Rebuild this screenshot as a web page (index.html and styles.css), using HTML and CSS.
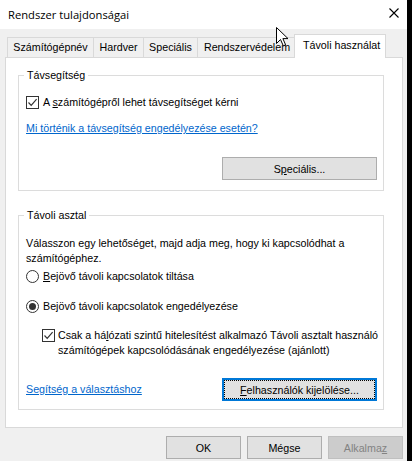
FILE: index.html
```html
<!DOCTYPE html>
<html lang="hu">
<head>
<meta charset="utf-8">
<title>Rendszer tulajdonságai</title>
<link rel="stylesheet" href="styles.css">
</head>
<body>
<div class="window">
  <div class="titlebar">
    <span class="title">Rendszer tulajdonságai</span>
    <svg class="close" width="10" height="10" viewBox="0 0 10 10"><path d="M0.5 0.5 L9.5 9.5 M9.5 0.5 L0.5 9.5" stroke="#000" stroke-width="1.1" fill="none"/></svg>
  </div>
  <div class="main">
    <div class="tabs">
      <div class="tab t1">Számítógépnév</div>
      <div class="tab t2">Hardver</div>
      <div class="tab t3">Speciális</div>
      <div class="tab t4">Rendszervédelem</div>
      <div class="tab active">Távoli használat</div>
    </div>
    <div class="panel">
      <fieldset class="group g1">
        <legend>Távsegítség</legend>
        <div class="row">
          <span class="cb"><svg width="11" height="11" viewBox="0 0 11 11"><path d="M1.5 5.5 L4.2 8.3 L9.6 2.2" stroke="#333" stroke-width="1.2" fill="none"/></svg></span>
          <span class="label">A <u>s</u>zámítógépről lehet távsegítséget kérni</span>
        </div>
        <a class="link l1" href="#">Mi történik a távsegítség engedélyezése esetén?</a>
        <div class="btnrow">
          <button class="btn wide">S<u>p</u>eciális...</button>
        </div>
      </fieldset>
      <fieldset class="group g2">
        <legend>Távoli asztal</legend>
        <p class="desc">Válasszon egy lehetőséget, majd adja meg, hogy ki kapcsolódhat a<br>számítógéphez.</p>
        <div class="row r1">
          <span class="radio"></span>
          <span class="label"><u>B</u>ejövő távoli kapcsolatok tiltása</span>
        </div>
        <div class="row r2">
          <span class="radio on"><span class="dot"></span></span>
          <span class="label">Be<u>j</u>övő távoli kapcsolatok engedélyezése</span>
        </div>
        <div class="nla">
          <span class="cb"><svg width="11" height="11" viewBox="0 0 11 11"><path d="M1.5 5.5 L4.2 8.3 L9.6 2.2" stroke="#333" stroke-width="1.2" fill="none"/></svg></span>
          <span class="label multi">Csak a há<u>l</u>ózati szintű hitelesítést alkalmazó Távoli asztalt használó<br>számítógépek kapcsolódásának engedélyezése (ajánlott)</span>
        </div>
        <div class="btnrow split">
          <a class="link" href="#">Segítség a választáshoz</a>
          <button class="btn wide focus"><u>F</u>elhasználók kijelölése...</button>
        </div>
      </fieldset>
    </div>
    <div class="footer">
      <button class="btn">OK</button>
      <button class="btn">Mégse</button>
      <button class="btn disabled">Alkalma<u>z</u></button>
    </div>
  </div>
  <svg class="cursor" width="13" height="20" viewBox="0 0 13 20"><path d="M0.5 0.5 L0.5 16.5 L4.5 12.5 L7.3 18.8 L9.6 17.8 L6.9 11.6 L12 11.6 Z" fill="#fff" stroke="#000" stroke-width="1" stroke-linejoin="miter"/></svg>
</div>
</body>
</html>
```
FILE: styles.css
```css
html, body {
  margin: 0;
  padding: 0;
}
body {
  background: #000;
  font-family: "Liberation Sans", Arial, sans-serif;
  font-size: 10.7px;
  color: #000;
}
.window {
  position: relative;
  width: 407px;
  height: 461px;
  background: #f0f0f0;
  overflow: hidden;
}
.titlebar {
  height: 29px;
  background: #fff;
  display: flex;
  align-items: center;
  justify-content: space-between;
  padding: 0 8px 0 8px;
  box-sizing: border-box;
}
.title {
  font-family: "Open Sans", "Noto Sans", sans-serif;
  font-size: 11.2px;
  margin-top: -1px;
}
.close {
  display: block;
  margin-top: -3px;
}
.main {
  padding: 5px 5px 0 5px;
}
.tabs {
  display: flex;
  align-items: flex-end;
  height: 23px;
  padding-left: 2px;
}
.tab {
  box-sizing: border-box;
  height: 20px;
  border: 1px solid #d9d9d9;
  border-bottom: none;
  background: #f0f0f0;
  text-align: center;
  line-height: 19px;
  margin-left: -1px;
  white-space: nowrap;
}
.t1 { width: 87px; margin-left: 0; }
.t2 { width: 51px; }
.t3 { width: 55px; }
.t4 { width: 100px; }
.tab.active {
  position: relative;
  z-index: 1;
  width: 92px;
  height: 24px;
  margin-left: -3px;
  margin-bottom: -1px;
  background: #fff;
  text-align: left;
  padding-left: 8px;
  line-height: 21px;
}
.panel {
  box-sizing: border-box;
  width: 398px;
  background: #fff;
  border: 1px solid #d9d9d9;
  padding: 0 0 17px 12px;
}
.group {
  box-sizing: border-box;
  width: 366px;
  min-width: 0;
  margin: 0;
  border: 1px solid #dcdcdc;
  padding: 14px 6px 10px 7px;
}
.g1 { margin-top: 11px; }
.g2 { margin-top: 18px; padding-bottom: 8px; }
legend {
  padding: 0 3px;
  margin-left: -2px;
  line-height: 13px;
  height: 13px;
}
.row {
  display: flex;
  align-items: center;
  height: 13px;
}
.cb {
  box-sizing: border-box;
  width: 13px;
  height: 13px;
  border: 1px solid #333;
  background: #fff;
  display: flex;
  align-items: center;
  justify-content: center;
  flex: none;
}
.cb svg { display: block; }
.label { margin-left: 4px; white-space: nowrap; line-height: 13px; }
.link {
  display: block;
  color: #0066cc;
  text-decoration: underline;
  line-height: 13px;
  white-space: nowrap;
}
.l1 { margin-top: 13px; }
.btnrow {
  display: flex;
  justify-content: flex-end;
  align-items: center;
  margin-top: 22px;
}
.btnrow.split {
  justify-content: space-between;
  margin-top: 20px;
}
.btn {
  box-sizing: border-box;
  height: 23px;
  width: 75px;
  background: #e1e1e1;
  border: 1px solid #adadad;
  font-family: "Liberation Sans", Arial, sans-serif;
  font-size: 10.7px;
  color: #000;
  padding: 0;
  margin: 0;
  border-radius: 0;
}
.btn.wide { width: 155px; }
.btn.focus {
  border: 2px solid #0078d7;
  outline: 1px dotted #000;
  outline-offset: -3px;
}
.btn.disabled {
  background: #cccccc;
  border-color: #bfbfbf;
  color: #838383;
}
.desc {
  margin: 0;
  line-height: 15px;
  white-space: nowrap;
}
.r1 { margin-top: 4px; }
.r2 { margin-top: 17px; }
.radio {
  box-sizing: border-box;
  width: 13px;
  height: 13px;
  border: 1px solid #333;
  border-radius: 50%;
  background: #fff;
  display: flex;
  align-items: center;
  justify-content: center;
  flex: none;
}
.radio .dot {
  width: 7px;
  height: 7px;
  border-radius: 50%;
  background: #333;
}
.nla {
  display: flex;
  align-items: flex-start;
  margin-top: 15px;
  padding-left: 16px;
}
.nla .cb { margin-top: 1px; }
.label.multi { line-height: 15px; margin-left: 3px; }
.footer {
  display: flex;
  justify-content: flex-end;
  gap: 6px;
  margin-top: 8px;
  width: 398px;
}
.cursor {
  position: absolute;
  left: 276px;
  top: 27px;
  z-index: 5;
}
```
